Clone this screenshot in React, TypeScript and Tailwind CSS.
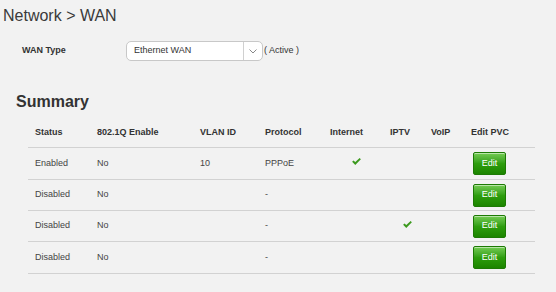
const COLS = [
  { key: "status", label: "Status", w: "w-[62px]" },
  { key: "q", label: "802.1Q Enable", w: "w-[103px]" },
  { key: "vlan", label: "VLAN ID", w: "w-[65px]" },
  { key: "proto", label: "Protocol", w: "w-[65px]" },
  { key: "inet", label: "Internet", w: "w-[60px]" },
  { key: "iptv", label: "IPTV", w: "w-[41px]" },
  { key: "voip", label: "VoIP", w: "w-[40px]" },
  { key: "edit", label: "Edit PVC", w: "flex-1" },
];

const ROWS = [
  { status: "Enabled", q: "No", vlan: "10", proto: "PPPoE", inet: true, iptv: false, h: "h-[32px]" },
  { status: "Disabled", q: "No", vlan: "", proto: "-", inet: false, iptv: false, h: "h-[31px]" },
  { status: "Disabled", q: "No", vlan: "", proto: "-", inet: false, iptv: true, h: "h-[31px]" },
  { status: "Disabled", q: "No", vlan: "", proto: "-", inet: false, iptv: false, h: "h-[32px]" },
];

// heavy check mark, like the ✔ glyph
function Check() {
  return (
    <svg viewBox="0 0 10 8" className="mb-[4px] h-[7px] w-[9px]" aria-hidden>
      <path d="M0 4.4 L1.6 2.9 L3.6 4.6 L8.6 0 L10 1.3 L3.6 8 Z" fill="#3c9a1e" />
    </svg>
  );
}

function EditButton() {
  return (
    <button className="ml-[2px] flex h-[23px] w-[33px] items-center justify-center rounded-[2px] border border-[#1d7a04] bg-gradient-to-b from-[#74cc52] via-[#2e9e0e] to-[#1c8500] text-[9px] text-white shadow-[inset_0_1px_0_rgba(255,255,255,0.5)]">
      Edit
    </button>
  );
}

export default function App() {
  return (
    <div className="h-[292px] w-[556px] overflow-hidden bg-[#f2f2f2] font-['Liberation_Sans',Arial,sans-serif] text-[#333]">
      {/* Page title */}
      <div className="ml-[3px] mt-[5px] h-[22px] text-[16px] leading-[22px] text-[#3a3a3a]">
        Network &gt; WAN
      </div>

      {/* WAN type */}
      <div className="mt-[14px] flex h-[20px] items-center pl-[22px] text-[9px]">
        <span className="w-[104px] font-bold">WAN Type</span>
        <div className="flex h-[20px] w-[137px] items-center rounded-[5px] border border-[#c8c8c8] bg-white">
          <span className="flex-1 pl-[7px] text-[#333]">Ethernet WAN</span>
          <div className="flex h-full w-[19px] items-center justify-center border-l border-[#d0d0d0]">
            <svg viewBox="0 0 8 5" className="h-[5px] w-[8px]" aria-hidden>
              <path d="M0.5 0.5 L4 4 L7.5 0.5" fill="none" stroke="#888" strokeWidth="1" />
            </svg>
          </div>
        </div>
        <span className="ml-[1px] text-[#333]">( Active )</span>
      </div>

      {/* Summary */}
      <div className="mt-[31px] h-[20px] pl-[16px] text-[16px] font-bold leading-[20px] text-[#333]">
        Summary
      </div>

      <div className="ml-[28px] mt-[6px] w-[507px] text-[9px]">
        <div className="flex h-[30px] items-center border-b border-[#d2d2d2] font-bold text-[#333]">
          {COLS.map((c) => (
            <div key={c.key} className={`${c.w} pl-[7px]`}>
              {c.label}
            </div>
          ))}
        </div>
        {ROWS.map((r, i) => (
          <div key={i} className={`flex ${r.h} items-center border-b border-[#d2d2d2] text-[#444]`}>
            <div className="w-[62px] pl-[7px]">{r.status}</div>
            <div className="w-[103px] pl-[7px]">{r.q}</div>
            <div className="w-[65px] pl-[7px]">{r.vlan}</div>
            <div className="w-[65px] pl-[7px]">{r.proto}</div>
            <div className="flex w-[60px] justify-center pl-[7px]">{r.inet && <Check />}</div>
            <div className="flex w-[41px] justify-center pl-[7px]">{r.iptv && <Check />}</div>
            <div className="w-[40px]" />
            <div className="flex-1 pl-[7px]">
              <EditButton />
            </div>
          </div>
        ))}
      </div>
    </div>
  );
}
